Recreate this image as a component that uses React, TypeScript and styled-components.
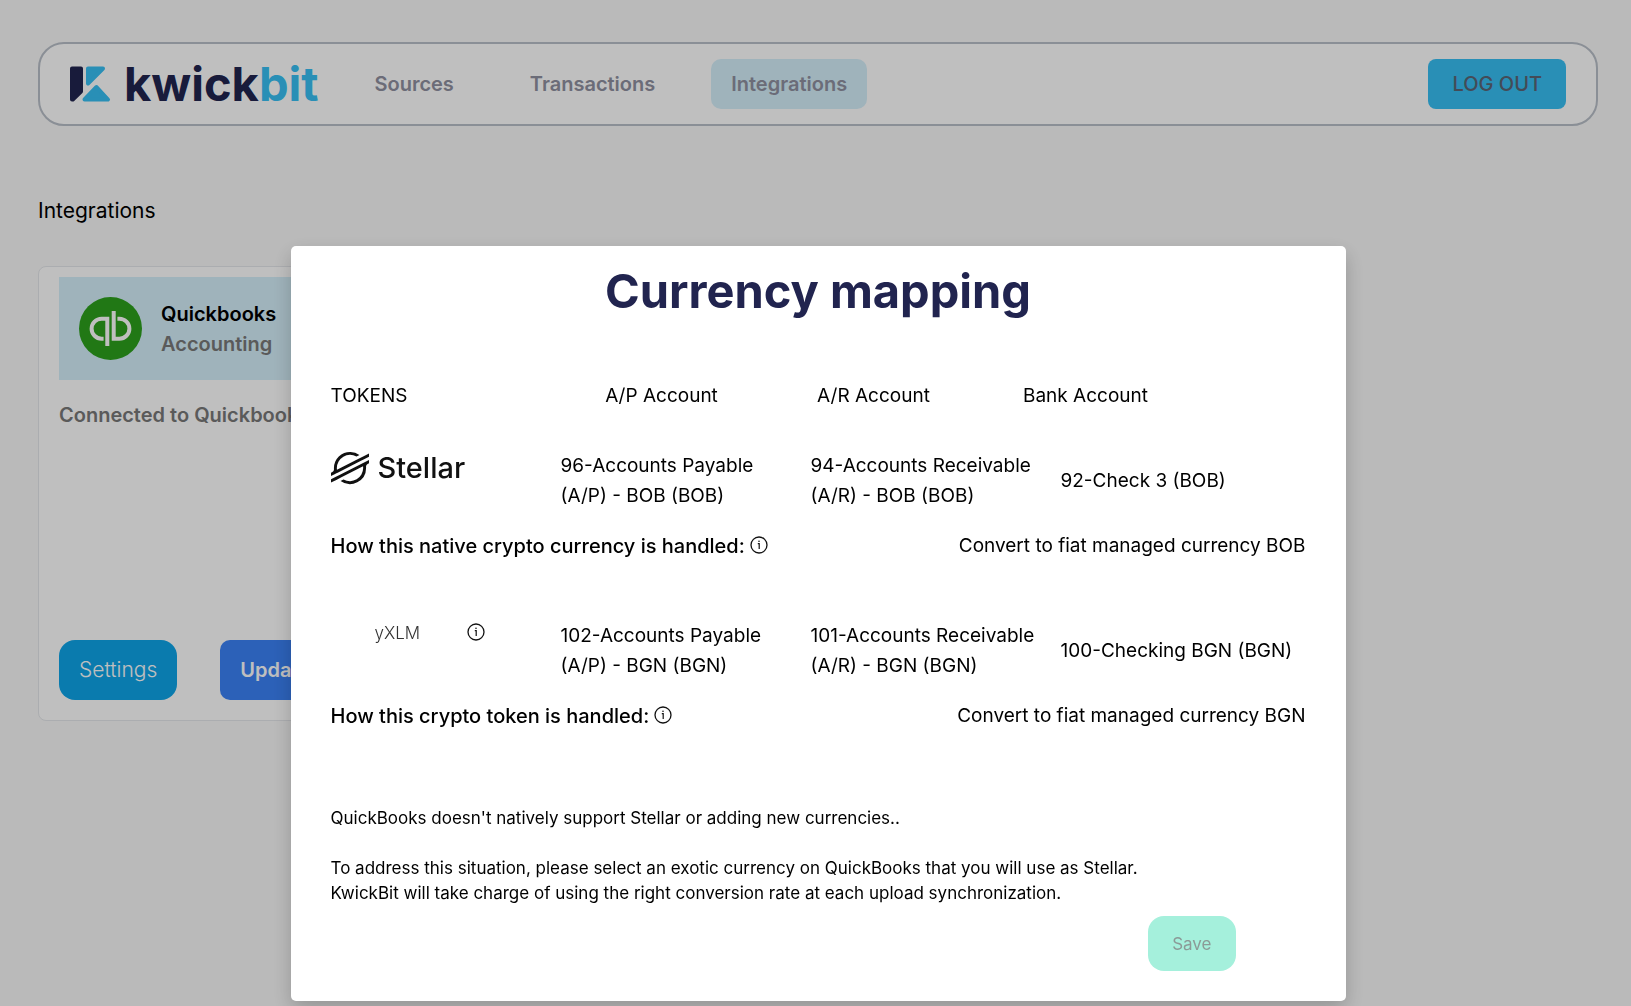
import React from "react";
import styled, { createGlobalStyle } from "styled-components";
import { SiStellar } from "react-icons/si";

const GlobalStyle = createGlobalStyle`
  *, *::before, *::after { box-sizing: border-box; }
  body {
    margin: 0;
    background: #f8f8f8;
    color: #000;
    font-family: Inter, "Liberation Sans", sans-serif;
    font-size: 19px;
    line-height: 30px;
  }
  h1, h2, h3, p { margin: 0; font: inherit; }
  button { border: 0; font: inherit; cursor: pointer; }
  table { border-spacing: 0; }
`;

const Page = styled.div`
  min-height: 100vh;
  padding: 42px 33px 42px 38px;
`;

const NavBar = styled.header`
  display: flex;
  align-items: center;
  justify-content: space-between;
  height: 84px;
  padding: 0 30px;
  background: #fff;
  border: 2px solid #b9bfc8;
  border-radius: 26px;
`;

const NavLeft = styled.div`
  display: flex;
  align-items: center;
  gap: 36px;
`;

const Logo = styled.a`
  display: flex;
  align-items: center;
  gap: 13px;
  color: #21244f;
  font-size: 47px;
  font-weight: 700;
  line-height: 50px;
  text-decoration: none;
`;

const LogoAccent = styled.span`
  color: #37bff3;
`;

const Links = styled.nav`
  display: flex;
  gap: 36px;
`;

const NavLink = styled.a<{ $active?: boolean }>`
  padding: 10px 20px;
  border-radius: 10px;
  background: ${(p) => (p.$active ? "#d5effa" : "transparent")};
  color: #8f90a0;
  font-size: 20px;
  font-weight: 600;
  text-decoration: none;
`;

const LogoutButton = styled.button`
  height: 50px;
  padding: 0 24px;
  border-radius: 8px;
  background: #37bff3;
  color: #5b6474;
  font-size: 20px;
  font-weight: 500;
`;

const PageTitle = styled.h1`
  margin-top: 70px;
  font-size: 21px;
`;

const Card = styled.section`
  display: flex;
  flex-direction: column;
  width: 420px;
  height: 455px;
  margin-top: 40px;
  padding: 10px 20px 20px;
  background: #fff;
  border: 1px solid #e5e7eb;
  border-radius: 8px;
  font-size: 20px;
  font-weight: 600;
`;

const CardBanner = styled.div`
  display: flex;
  align-items: center;
  gap: 19px;
  padding: 20px;
  background: #d5effa;
`;

const Muted = styled.p`
  color: #797979;
`;

const CardStatus = styled(Muted)`
  margin-top: 20px;
`;

const CardActions = styled.div`
  display: flex;
  gap: 43px;
  margin-top: auto;
`;

const CardButton = styled.button<{ $primary?: boolean }>`
  height: 60px;
  padding: 0 20px;
  border-radius: ${(p) => (p.$primary ? 10 : 16)}px;
  background: ${(p) => (p.$primary ? "#3b82f6" : "#0ea5e9")};
  color: #fff;
  font-size: ${(p) => (p.$primary ? 20 : 21)}px;
  font-weight: ${(p) => (p.$primary ? 600 : 300)};
`;

const Backdrop = styled.div`
  position: fixed;
  inset: 0;
  display: flex;
  justify-content: center;
  align-items: flex-start;
  padding: 246px 33px 5px 38px;
  background: rgba(0, 0, 0, 0.25);
`;

const Dialog = styled.div`
  width: 100%;
  max-width: 1055px;
  padding: 15px 40px 30px;
  background: #fff;
  border-radius: 5px;
  box-shadow: 0 8px 20px rgba(0, 0, 0, 0.2);
`;

const DialogTitle = styled.h2`
  color: #21244f;
  font-size: 47px;
  font-weight: 700;
  line-height: 60px;
  text-align: center;
`;

const MappingTable = styled.table`
  display: block;
  margin-top: 60px;
`;

const HeadGroup = styled.thead`
  display: block;
`;

const HeadRow = styled.tr`
  display: grid;
  grid-template-columns: 225px repeat(3, 212px);
`;

const HeadCell = styled.th<{ $first?: boolean }>`
  padding: 0;
  font-weight: 400;
  text-align: ${(p) => (p.$first ? "left" : "center")};
`;

const TokenGroup = styled.tbody`
  display: block;
  padding-top: 40px;

  & + & { padding-top: 60px; }
`;

const TokenRow = styled.tr`
  display: grid;
  grid-template-columns: 230px 250px 250px 1fr;
`;

const Cell = styled.td<{ $middle?: boolean }>`
  padding: 0 20px 0 0;
  align-self: ${(p) => (p.$middle ? "center" : "start")};

  &:last-child { padding-right: 0; }
`;

const StellarBrand = styled.div`
  display: flex;
  align-items: center;
  gap: 9px;
  height: 34px;
  color: #111;
  font-size: 29px;
  font-weight: 500;

  svg { flex: none; }
`;

const TokenName = styled.div`
  display: flex;
  align-items: center;
  justify-content: space-between;
  width: 154px;
  padding-left: 44px;
  color: #333;
  font-size: 17px;
  font-weight: 300;
  line-height: 25px;
`;

const HandlingRow = styled.tr`
  display: flex;
  justify-content: space-between;
  padding-top: 20px;
`;

const HandlingLabel = styled.th`
  display: flex;
  align-items: center;
  gap: 5px;
  padding: 0;
  font-size: 20px;
  font-weight: 500;
`;

const Notes = styled.div`
  display: grid;
  gap: 25px;
  padding-top: 75px;
  font-size: 17px;
  line-height: 25px;
`;

const Footer = styled.div`
  display: flex;
  justify-content: flex-end;
  padding: 10px 70px 0 0;
`;

const SaveButton = styled.button`
  height: 55px;
  padding: 0 24px;
  border-radius: 16px;
  background: #a5f0dc;
  color: #8b9a97;
  font-size: 17px;
`;

const InfoSvg = styled.svg`
  flex: none;
  margin-bottom: 3px;
  color: #111;
`;

function InfoIcon() {
  return (
    <InfoSvg width="18" height="18" viewBox="0 0 18 18" fill="none" stroke="currentColor" aria-hidden="true">
      <circle cx="9" cy="9" r="8" strokeWidth="1.3" />
      <path d="M7.8 7.6H9.2V13" strokeWidth="1.2" />
      <circle cx="9" cy="5.3" r="0.8" fill="currentColor" stroke="none" />
    </InfoSvg>
  );
}

function KwickbitMark() {
  return (
    <svg width="41" height="36" viewBox="0 0 41 36" strokeLinejoin="round" strokeWidth="4" aria-hidden="true">
      <path d="M2 2.5H11V25.5L2.8 33.5H2Z" fill="#21244f" stroke="#21244f" />
      <path d="M18 2.5H33L18 17.5Z" fill="#37bff3" stroke="#37bff3" />
      <path d="M26.5 21L38 33.5H14.5Z" fill="#37bff3" stroke="#37bff3" />
    </svg>
  );
}

function QuickbooksMark() {
  return (
    <svg width="63" height="63" viewBox="0 0 63 63" aria-hidden="true">
      <circle cx="31.5" cy="31.5" r="31.5" fill="#2ca01c" />
      <g fill="none" stroke="#fff" strokeWidth="4">
        <path d="M28.3 49V21.7H22.6a10 10 0 0 0 0 20H24.6" />
        <path d="M34.7 14V41.7H40.4a10 10 0 0 0 0-20H38.4" />
      </g>
    </svg>
  );
}

const tokens = [
  {
    id: "stellar",
    payable: "96-Accounts Payable (A/P) - BOB (BOB)",
    receivable: "94-Accounts Receivable (A/R) - BOB (BOB)",
    bank: "92-Check 3 (BOB)",
    label: "How this native crypto currency is handled:",
    handling: "Convert to fiat managed currency BOB",
  },
  {
    id: "yXLM",
    payable: "102-Accounts Payable (A/P) - BGN (BGN)",
    receivable: "101-Accounts Receivable (A/R) - BGN (BGN)",
    bank: "100-Checking BGN (BGN)",
    label: "How this crypto token is handled:",
    handling: "Convert to fiat managed currency BGN",
  },
];

export default function App() {
  return (
    <>
      <GlobalStyle />
      <Page>
        <NavBar>
          <NavLeft>
            <Logo href="#">
              <KwickbitMark />
              <span>kwick<LogoAccent>bit</LogoAccent></span>
            </Logo>
            <Links>
              <NavLink href="#sources">Sources</NavLink>
              <NavLink href="#transactions">Transactions</NavLink>
              <NavLink href="#integrations" $active>Integrations</NavLink>
            </Links>
          </NavLeft>
          <LogoutButton type="button">LOG OUT</LogoutButton>
        </NavBar>
        <PageTitle>Integrations</PageTitle>
        <Card>
          <CardBanner>
            <QuickbooksMark />
            <div>
              <h3>Quickbooks</h3>
              <Muted>Accounting</Muted>
            </div>
          </CardBanner>
          <CardStatus>Connected to Quickbooks</CardStatus>
          <CardActions>
            <CardButton type="button">Settings</CardButton>
            <CardButton type="button" $primary>Update</CardButton>
          </CardActions>
        </Card>
      </Page>
      <Backdrop>
        <Dialog role="dialog" aria-modal="true" aria-labelledby="mapping-title">
          <DialogTitle id="mapping-title">Currency mapping</DialogTitle>
          <MappingTable>
            <HeadGroup>
              <HeadRow>
                <HeadCell scope="col" $first>TOKENS</HeadCell>
                <HeadCell scope="col">A/P Account</HeadCell>
                <HeadCell scope="col">A/R Account</HeadCell>
                <HeadCell scope="col">Bank Account</HeadCell>
              </HeadRow>
            </HeadGroup>
            {tokens.map((t) => (
              <TokenGroup key={t.id}>
                <TokenRow>
                  <Cell>
                    {t.id === "stellar" ? (
                      <StellarBrand><SiStellar size={38} />Stellar</StellarBrand>
                    ) : (
                      <TokenName>{t.id}<InfoIcon /></TokenName>
                    )}
                  </Cell>
                  <Cell>{t.payable}</Cell>
                  <Cell>{t.receivable}</Cell>
                  <Cell $middle>{t.bank}</Cell>
                </TokenRow>
                <HandlingRow>
                  <HandlingLabel scope="row">{t.label}<InfoIcon /></HandlingLabel>
                  <Cell>{t.handling}</Cell>
                </HandlingRow>
              </TokenGroup>
            ))}
          </MappingTable>
          <Notes>
            <p>QuickBooks doesn't natively support Stellar or adding new currencies..</p>
            <p>
              To address this situation, please select an exotic currency on QuickBooks that you will use as Stellar.
              <br />
              KwickBit will take charge of using the right conversion rate at each upload synchronization.
            </p>
          </Notes>
          <Footer>
            <SaveButton type="button">Save</SaveButton>
          </Footer>
        </Dialog>
      </Backdrop>
    </>
  );
}
